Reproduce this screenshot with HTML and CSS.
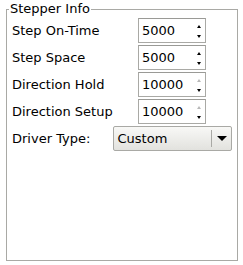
FILE: index.html
```html
<!DOCTYPE html>
<html lang="en">
  <head>
    <meta charset="UTF-8" />
    <meta name="viewport" content="width=device-width, initial-scale=1.0" />
    <title>Stepper Info</title>
    <link rel="stylesheet" href="styles.css">
  </head>
  <body>
    <fieldset class="group">
      <legend>Stepper Info</legend>

      <!-- Step timing fields -->
      <div class="spin-grid">
        <span class="label">Step On-Time</span>
        <div class="spinbox">
          <span class="value">5000</span>
          <span class="arrows"><i class="up"></i><i class="down"></i></span>
        </div>

        <span class="label">Step Space</span>
        <div class="spinbox">
          <span class="value">5000</span>
          <span class="arrows"><i class="up"></i><i class="down"></i></span>
        </div>

        <span class="label">Direction Hold</span>
        <div class="spinbox">
          <span class="value">10000</span>
          <span class="arrows"><i class="up off"></i><i class="down"></i></span>
        </div>

        <span class="label">Direction Setup</span>
        <div class="spinbox">
          <span class="value">10000</span>
          <span class="arrows"><i class="up off"></i><i class="down"></i></span>
        </div>
      </div>

      <!-- Driver type combo -->
      <div class="driver-row">
        <span class="label driver-label">Driver Type:</span>
        <div class="combo">
          <span class="combo-text">Custom</span>
          <span class="combo-btn"><i class="combo-arrow"></i></span>
        </div>
      </div>
    </fieldset>
  </body>
</html>
```

FILE: styles.css
```css
html,
body {
  height: 100%;
}

body {
  margin: 0;
  padding: 1px 5px 4px 6px;
  box-sizing: border-box;
  background: #fff;
  font-family: "DejaVu Sans", sans-serif;
  font-size: 13px;
  color: #000;
}

.group {
  height: 100%;
  margin: 0;
  padding: 1px 5px 0 5px;
  box-sizing: border-box;
  border: 1px solid #a9a9a5;
  min-width: 0;
}

.group legend {
  padding: 0 1px;
  margin-left: -3px;
  line-height: 16px;
}

.spin-grid {
  display: grid;
  grid-template-columns: 126px 68px;
  grid-auto-rows: 25px;
  row-gap: 2px;
  align-items: center;
}

.label {
  white-space: nowrap;
}

.spinbox {
  height: 25px;
  box-sizing: border-box;
  border: 1px solid #a9a9a5;
  border-top-color: #9a9a96;
  background: #fff;
  display: flex;
  align-items: center;
  justify-content: space-between;
  padding: 0 4px 0 3px;
}

.arrows {
  display: flex;
  flex-direction: column;
  gap: 7px;
  margin-top: 1px;
}

.arrows i {
  display: block;
  width: 0;
  height: 0;
  border-left: 2px solid transparent;
  border-right: 2px solid transparent;
}

.arrows .up {
  border-bottom: 3px solid #000;
}

.arrows .up.off {
  border-bottom-color: #b8b8b8;
}

.arrows .down {
  border-top: 3px solid #000;
}

.driver-row {
  display: flex;
  align-items: center;
  margin-top: 2px;
}

.driver-label {
  width: 101px;
}

.combo {
  width: 120px;
  height: 25px;
  box-sizing: border-box;
  border: 1px solid #a9a9a5;
  border-radius: 2px;
  background: linear-gradient(#f8f8f6, #e2e2de);
  display: flex;
  align-items: center;
}

.combo-text {
  flex: 1;
  padding-left: 4px;
}

.combo-btn {
  width: 19px;
  height: 17px;
  border-left: 1px solid #a9a9a5;
  display: flex;
  align-items: center;
  justify-content: center;
}

.combo-arrow {
  display: block;
  width: 0;
  height: 0;
  border-left: 5px solid transparent;
  border-right: 5px solid transparent;
  border-top: 5px solid #000;
}
```
